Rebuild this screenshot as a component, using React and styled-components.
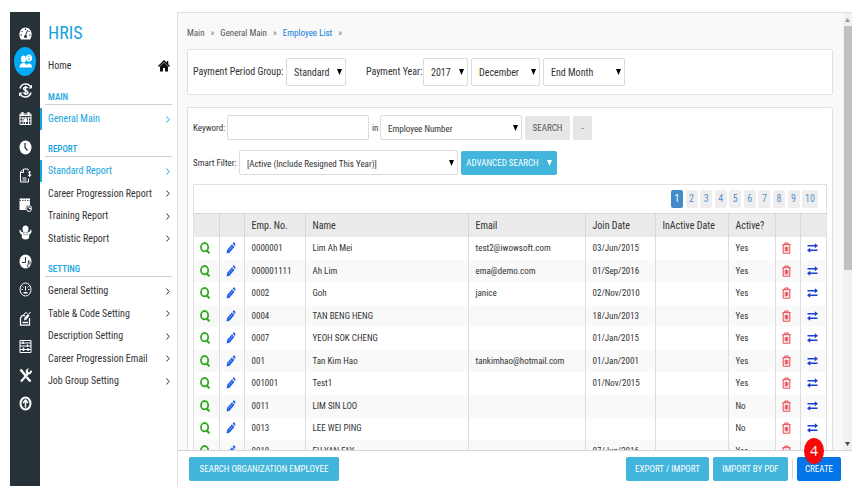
import styled, { createGlobalStyle } from "styled-components";

const GlobalStyle = createGlobalStyle`
  * {
    box-sizing: border-box;
  }

  body {
    margin: 0;
    background: #ffffff;
    color: #333333;
    font: 10px/14px "Roboto Condensed", Roboto, sans-serif;
  }

  button, input, select {
    font: inherit;
    color: inherit;
  }
`;

const Page = styled.div`
  display: flex;
  height: 100vh;
  padding: 12px 10px 10px;
`;

const Rail = styled.nav`
  display: flex;
  flex: none;
  flex-direction: column;
  width: 30px;
  padding-top: 7px;
  background: #263238;
`;

const RailLink = styled.a`
  display: flex;
  flex: none;
  align-items: center;
  justify-content: center;
  width: 22px;
  height: 28px;
  margin: 0 4px;
  border-radius: 50%;
  color: #ffffff;
  background: ${({ $active }) => ($active ? "#03a9f4" : "transparent")};

  &:nth-child(even) {
    height: 29px;
  }
`;

const Menu = styled.aside`
  flex: none;
  width: 138px;
  border-right: 1px solid #e0e0e0;
  background: #ffffff;
`;

const Brand = styled.h1`
  margin: 0;
  padding: 9px 8px 0;
  font-size: 18px;
  font-weight: 400;
  line-height: 24px;
  color: #14a5e0;
`;

const MenuLink = styled.a`
  display: flex;
  align-items: center;
  justify-content: space-between;
  height: 22px;
  padding: 0 7px 0 8px;
  text-decoration: none;
  color: ${({ $active }) => ($active ? "#14a5e0" : "#333333")};
  box-shadow: ${({ $active }) => ($active ? "inset 2px 0 #14a5e0" : "none")};

  &:nth-of-type(even) {
    height: 23px;
  }
`;

const HomeLink = styled(MenuLink)`
  margin: 10px 0;
`;

const Section = styled.section`
  margin-bottom: 9px;
`;

const SectionTitle = styled.h2`
  height: 18px;
  margin: 0 5px 3px;
  padding: 4px 3px 0;
  border-bottom: 1px solid #cfcfcf;
  font-size: 9px;
  font-weight: 500;
  line-height: 12px;
  color: #14a5e0;
`;

const Main = styled.main`
  display: flex;
  flex: 1;
  flex-direction: column;
  min-width: 0;
`;

const Viewport = styled.div`
  display: flex;
  flex: 1;
  min-height: 0;
  overflow: hidden;
  border-top: 1px solid #e0e0e0;
  background: #f9f9f9;
`;

const Content = styled.div`
  flex: 1;
  min-width: 0;
  padding: 13px 10px 0 9px;
`;

const ScrollTrack = styled.div`
  display: flex;
  flex: none;
  flex-direction: column;
  align-items: center;
  justify-content: space-between;
  width: 9px;
  padding: 5px 0 4px;
  background: #f1f1f1;
`;

const ScrollThumb = styled.div`
  width: 8px;
  height: 57%;
  margin: 4px 0 auto;
  background: #c1c1c1;
`;

const Crumbs = styled.nav`
  display: flex;
  gap: 6px;
  margin-bottom: 9px;
  font-size: 9px;
  color: #777777;
`;

const Crumb = styled.a`
  text-decoration: none;
  color: ${({ $current }) => ($current ? "#0d7bdc" : "#555555")};
`;

const Panel = styled.section`
  margin-bottom: 12px;
  padding: 8px 5px;
  border: 1px solid #e0e0e0;
  border-radius: 2px;
  background: #ffffff;
`;

const SearchPanel = styled(Panel)`
  padding-top: 7px;
  font-size: 9px;
`;

const FieldRow = styled.div`
  display: flex;
  align-items: center;
  gap: 3px;
  margin-bottom: ${({ $spaced }) => ($spaced ? "10px" : "0")};
`;

const FieldLabel = styled.label`
  flex: none;
  width: ${({ $width }) => $width};
  margin-left: ${({ $offset }) => $offset || "0"};
  white-space: nowrap;
`;

const TextInput = styled.input`
  width: 142px;
  height: 25px;
  padding: 0 7px;
  border: 1px solid #dcdcdc;
  border-radius: 2px;
`;

const SelectBox = styled.span`
  display: grid;
  flex: none;
  align-items: center;
  width: ${({ $width }) => $width};

  > * {
    grid-area: 1 / 1;
  }

  svg {
    justify-self: end;
    margin-right: 4px;
    color: #000000;
    pointer-events: none;
  }
`;

const Select = styled.select`
  width: 100%;
  height: ${({ $tall }) => ($tall ? "28px" : "25px")};
  padding: 2px 7px 0;
  border: 1px solid #dcdcdc;
  border-radius: 2px;
  background: #ffffff;
  appearance: none;
`;

const Button = styled.button`
  display: inline-flex;
  flex: none;
  align-items: center;
  justify-content: center;
  gap: 8px;
  width: ${({ $width }) => $width};
  height: 24px;
  padding: 0;
  border: 0;
  border-radius: 2px;
  font-size: 9px;
  white-space: nowrap;
  color: ${({ $tone }) => ($tone === "grey" ? "#555555" : "#ffffff")};
  background: ${({ $tone }) =>
    ({ grey: "#e6e6e6", primary: "#0275e8" })[$tone] || "#41b5dc"};
`;

const TableBox = styled.div`
  margin-top: 9px;
  border: 1px solid #e0e0e0;
`;

const Pagination = styled.nav`
  display: flex;
  align-items: center;
  justify-content: space-between;
  width: 147px;
  height: 28px;
  margin: 0 8px 0 auto;
  font-size: 10px;
`;

const PageButton = styled.button`
  min-width: 12px;
  height: 18px;
  padding: 0 3px;
  border: 0;
  border-radius: 2px;
  color: ${({ $current }) => ($current ? "#ffffff" : "#5b93c9")};
  background: ${({ $current }) => ($current ? "#428bca" : "#eeeeee")};
`;

const Table = styled.table`
  width: 100%;
  border-collapse: collapse;
  table-layout: fixed;
`;

const Col = styled.col`
  width: ${({ $width }) => $width};
`;

const HeadCell = styled.th`
  height: 23px;
  padding: 1px 7px 0;
  border-top: 1px solid #d8d8d8;
  border-right: 1px solid #d8d8d8;
  background: #ebebeb;
  font-size: 10px;
  font-weight: inherit;
  text-align: left;
  white-space: nowrap;

  &:last-child {
    border-right: 0;
  }
`;

const Row = styled.tr`
  height: 23px;

  &:nth-child(even) {
    height: 22px;
    background: #f9f9f9;
  }
`;

const Cell = styled.td`
  padding: 0 7px;
  border-right: 1px solid #dddddd;
  white-space: nowrap;

  &:last-child {
    border-right: 0;
  }
`;

const IconCell = styled(Cell)`
  padding: 0 6px;
`;

const IconButton = styled.button`
  display: block;
  padding: 0;
  border: 0;
  background: none;
  color: ${({ $color }) => $color};

  svg {
    display: block;
  }
`;

const ActionBar = styled.footer`
  display: flex;
  flex: none;
  align-items: center;
  gap: 4px;
  height: 36px;
  padding: 0 11px;
  border-top: 1px solid #d5d5d5;
  background: #ffffff;
`;

const Spacer = styled.span`
  flex: 1;
`;

const Divider = styled.span`
  width: 1px;
  height: 20px;
  background: #d5d5d5;
`;

const CreateWrap = styled.span`
  position: relative;
  display: flex;
`;

const StepBadge = styled.span`
  position: absolute;
  top: -19px;
  left: 7px;
  width: 20px;
  height: 26px;
  border-radius: 50%;
  background: #f80808;
  color: #ffffff;
  font: 14px/26px "Open Sans", sans-serif;
  text-align: center;
`;

const railIcons = [
  {
    label: "Dashboard",
    art: (
      <>
        <path d="M4 27C-3 17 2 3 13 3s16 14 9 24z" fill="currentColor" />
        <path d="M13 20l4-12M13 5v3M5 10l2 2M21 10l-2 2M3 18h3M20 18h3" stroke="#263238" strokeWidth="2" />
        <ellipse cx="13" cy="21" rx="3" ry="3" fill="#263238" />
      </>
    ),
  },
  {
    label: "Employees",
    art: (
      <>
        <ellipse cx="9" cy="10" rx="5" ry="7" fill="currentColor" />
        <path d="M1 27c0-6 3-9 8-9s7 3 7 9zM14 27c1-6 3-8 6-8s6 2 6 8z" fill="currentColor" />
        <ellipse cx="20" cy="8" rx="6" ry="7" fill="currentColor" />
        <path d="M20 4v2m0 2v4" stroke="#03a9f4" strokeWidth="2" />
      </>
    ),
  },
  {
    label: "Payroll",
    art: (
      <>
        <path d="M2 11C5 0 19-1 24 9M24 19C21 30 7 31 2 21" fill="none" stroke="currentColor" strokeWidth="3" />
        <path d="M25 4v6h-6M1 26v-6h6" fill="none" stroke="currentColor" strokeWidth="2" />
        <path d="M17 10c-2-3-8-2-8 1 0 5 9 3 9 8 0 4-7 4-9 0M13 6v18" fill="none" stroke="currentColor" strokeWidth="3" />
      </>
    ),
  },
  {
    label: "Calendar",
    art: (
      <>
        <path d="M2 6h22v21H2z" fill="none" stroke="currentColor" strokeWidth="2" />
        <path d="M2 9h22M2 14h22M2 20h22M8 12v15M13 12v15M19 12v15" stroke="currentColor" strokeWidth="2" />
        <path d="M7 2v7M19 2v7" stroke="currentColor" strokeWidth="4" />
        <path d="M10 16h6v6h-6z" fill="currentColor" />
      </>
    ),
  },
  {
    label: "Time",
    art: (
      <>
        <ellipse cx="13" cy="15" rx="12" ry="14" fill="currentColor" />
        <path d="M12 6v9l5 6" fill="none" stroke="#263238" strokeWidth="2.5" />
      </>
    ),
  },
  {
    label: "Claims",
    art: (
      <g fill="none" stroke="currentColor" strokeWidth="2">
        <path d="M18 5V2H9L3 8v20h16V21M9 2v7H3" />
        <path d="M7 20h8M7 24h8" />
        <path d="M24 9c-2-3-6-1-5 1s5 2 5 4-4 3-6 0M21 6v12" />
      </g>
    ),
  },
  {
    label: "Schedule",
    art: (
      <>
        <path d="M1 8h21v8c-7-1-10 5-8 10H1z" fill="currentColor" />
        <path d="M1 5h21" stroke="currentColor" strokeWidth="3" />
        <path d="M5 2v6M10 2v6M15 2v6M20 2v6" stroke="currentColor" strokeWidth="2" />
        <ellipse cx="20" cy="23" rx="5" ry="6" fill="none" stroke="currentColor" strokeWidth="2" />
        <path d="M20 19v4h4" fill="none" stroke="currentColor" strokeWidth="2" />
      </>
    ),
  },
  {
    label: "Benefits",
    art: (
      <>
        <ellipse cx="13" cy="8" rx="6" ry="7" fill="currentColor" />
        <path d="M2 8c2 7 6 7 11 7s9 0 11-7c3 7-1 10-4 12 2 5-1 9-7 9s-9-4-7-9C3 18-1 15 2 8z" fill="currentColor" />
        <path d="M7 17c3 3 9 3 12 0" fill="none" stroke="#263238" strokeWidth="1" />
      </>
    ),
  },
  {
    label: "Overtime",
    art: (
      <>
        <ellipse cx="13" cy="15" rx="12" ry="14" fill="currentColor" />
        <path d="M13 6v11H6M20 12l-3 14M22 15v6" fill="none" stroke="#263238" strokeWidth="2" />
      </>
    ),
  },
  {
    label: "Performance",
    art: (
      <>
        <ellipse cx="13" cy="15" rx="11" ry="13" fill="none" stroke="currentColor" strokeWidth="2" />
        <path d="M13 8v9M5 15h3M18 15h3M7 9l2 2M19 9l-2 2" stroke="currentColor" strokeWidth="2" />
        <path d="M9 20h8v3H9z" fill="currentColor" />
      </>
    ),
  },
  {
    label: "Appraisal",
    art: (
      <>
        <path d="M12 9H6l-3 5v14h18V14" fill="none" stroke="currentColor" strokeWidth="2.5" />
        <path d="M10 19l1-6 7-7 3 3-6 8z" fill="currentColor" />
        <path d="M7 23h11" stroke="currentColor" strokeWidth="3" />
        <path d="M9 8l4-5 4 2M20 6l3-4" fill="none" stroke="currentColor" strokeWidth="2" />
      </>
    ),
  },
  {
    label: "Reports",
    art: (
      <>
        <path d="M2 3h22v24H2z" fill="none" stroke="currentColor" strokeWidth="2" />
        <path d="M2 8h22M2 14h22M2 21h22" stroke="currentColor" strokeWidth="2" />
        <path d="M8 5v5M17 11v5M9 17v7M18 18v6" stroke="currentColor" strokeWidth="3" />
      </>
    ),
  },
  {
    label: "Tools",
    art: (
      <>
        <path d="M3 3l10 12M15 18l8 9" stroke="currentColor" strokeWidth="5" />
        <path d="M4 27L18 11" stroke="currentColor" strokeWidth="4" />
        <path d="M24 4l-4 5-3-3 3-5c-6 0-8 5-6 9 3 5 11 3 12-3z" fill="currentColor" />
      </>
    ),
  },
  {
    label: "Upgrade",
    art: (
      <>
        <ellipse cx="13" cy="15" rx="10" ry="12" fill="none" stroke="currentColor" strokeWidth="4" />
        <path d="M13 23V9M8 14l5-6 5 6" fill="none" stroke="currentColor" strokeWidth="3" />
      </>
    ),
  },
];

const sections = [
  { title: "MAIN", active: "General Main", items: ["General Main"] },
  {
    title: "REPORT",
    active: "Standard Report",
    items: ["Standard Report", "Career Progression Report", "Training Report", "Statistic Report"],
  },
  {
    title: "SETTING",
    items: [
      "General Setting",
      "Table & Code Setting",
      "Description Setting",
      "Career Progression Email",
      "Job Group Setting",
    ],
  },
];

const employees = [
  ["0000001", "Lim Ah Mei", "test2@iwowsoft.com", "03/Jun/2015", "", "Yes"],
  ["000001111", "Ah Lim", "ema@demo.com", "01/Sep/2016", "", "Yes"],
  ["0002", "Goh", "janice", "02/Nov/2010", "", "Yes"],
  ["0004", "TAN BENG HENG", "", "18/Jun/2013", "", "Yes"],
  ["0007", "YEOH SOK CHENG", "", "01/Jan/2015", "", "Yes"],
  ["001", "Tan Kim Hao", "tankimhao@hotmail.com", "01/Jan/2001", "", "Yes"],
  ["001001", "Test1", "", "01/Nov/2015", "", "Yes"],
  ["0011", "LIM SIN LOO", "", "", "", "No"],
  ["0013", "LEE WEI PING", "", "", "", "No"],
  ["0018", "EU YAN FAY", "", "07/Jun/2016", "", "Yes"],
];

const headings = ["", "", "Emp. No.", "Name", "Email", "Join Date", "InActive Date", "Active?", "", ""];
const columnWidths = ["25px", "25px", "61px", "auto", "117px", "70px", "73px", "47px", "25px", "26px"];

const Caret = () => (
  <svg width="5" height="6" viewBox="0 0 5 6">
    <path d="M0 0h5L2.5 6z" fill="currentColor" />
  </svg>
);

const Chevron = () => (
  <svg width="4" height="7" viewBox="0 0 4 7">
    <path d="M.5.5l2.7 3-2.7 3" fill="none" stroke="currentColor" strokeWidth="1" />
  </svg>
);

const HomeIcon = () => (
  <svg width="12" height="12" viewBox="0 0 24 24">
    <path d="M12 5l8 8v10h-6v-7h-4v7H4V13z" fill="#111111" />
    <path d="M1 13L12 2l11 11M19 2v7" fill="none" stroke="#111111" strokeWidth="3" />
  </svg>
);

const ViewIcon = () => (
  <svg width="10" height="12" viewBox="0 0 10 12">
    <ellipse cx="4.6" cy="5.2" rx="3.6" ry="4.2" fill="none" stroke="currentColor" strokeWidth="1.8" />
    <path d="M6.4 8l3 3.4" stroke="currentColor" strokeWidth="2" />
  </svg>
);

const EditIcon = () => (
  <svg width="10" height="12" viewBox="0 0 10 12">
    <path d="M.6 11.4l.6-3.6L6 2.2l2.4 2.8-4.9 5.7zM6.6 1.5L7.6.4c.5-.5 2.2 1.3 1.7 2.1L9 4.2z" fill="currentColor" />
    <path d="M2.6 8.6l4-4.6" stroke="#a9c2fa" strokeWidth=".6" />
  </svg>
);

const TrashIcon = () => (
  <svg width="9" height="12" viewBox="0 0 9 12">
    <path d="M.3 2.7h8.4M2.8 2.5V1h3.4v1.5M1.2 3v8.2h6.6V3M3.2 4.8v4.6M4.5 4.8v4.6M5.8 4.8v4.6" fill="none" stroke="currentColor" strokeWidth="1" />
  </svg>
);

const TransferIcon = () => (
  <svg width="11" height="10" viewBox="0 0 11 10">
    <path d="M.5 2.7h8M2.5 7.3h8" stroke="currentColor" strokeWidth="1.6" />
    <path d="M7.8.2v5L11 2.7zM3.2 4.8v5L0 7.3z" fill="currentColor" />
  </svg>
);

function SelectField({ id, label, value, width, tall }) {
  return (
    <SelectBox $width={width}>
      <Select id={id} aria-label={label} $tall={tall} defaultValue={value}>
        <option>{value}</option>
      </Select>
      <Caret />
    </SelectBox>
  );
}

function EmployeeTable() {
  return (
    <Table>
      <colgroup>
        {columnWidths.map((width, i) => (
          <Col key={i} $width={width} />
        ))}
      </colgroup>
      <thead>
        <tr>
          {headings.map((heading, i) => (
            <HeadCell key={i}>{heading}</HeadCell>
          ))}
        </tr>
      </thead>
      <tbody>
        {employees.map((employee) => (
          <Row key={employee[0]}>
            <IconCell>
              <IconButton $color="#2faa1e" aria-label="View"><ViewIcon /></IconButton>
            </IconCell>
            <IconCell>
              <IconButton $color="#1f5fe8" aria-label="Edit"><EditIcon /></IconButton>
            </IconCell>
            {employee.map((value, i) => (
              <Cell key={i}>{value}</Cell>
            ))}
            <IconCell>
              <IconButton $color="#e8454c" aria-label="Delete"><TrashIcon /></IconButton>
            </IconCell>
            <IconCell>
              <IconButton $color="#1a3fd0" aria-label="Transfer"><TransferIcon /></IconButton>
            </IconCell>
          </Row>
        ))}
      </tbody>
    </Table>
  );
}

export default function App() {
  return (
    <Page>
      <GlobalStyle />
      <Rail>
        {railIcons.map(({ label, art }) => (
          <RailLink key={label} href="#" aria-label={label} $active={label === "Employees"}>
            <svg width="13" height="15" viewBox="0 0 26 30">{art}</svg>
          </RailLink>
        ))}
      </Rail>

      <Menu>
        <Brand>HRIS</Brand>
        <HomeLink href="#">
          Home
          <HomeIcon />
        </HomeLink>
        {sections.map(({ title, active, items }) => (
          <Section key={title}>
            <SectionTitle>{title}</SectionTitle>
            {items.map((item) => (
              <MenuLink key={item} href="#" $active={item === active}>
                {item}
                <Chevron />
              </MenuLink>
            ))}
          </Section>
        ))}
      </Menu>

      <Main>
        <Viewport>
          <Content>
            <Crumbs>
              <Crumb href="#">Main</Crumb>»
              <Crumb href="#">General Main</Crumb>»
              <Crumb href="#" $current>Employee List</Crumb>»
            </Crumbs>

            <Panel>
              <FieldRow>
                <FieldLabel htmlFor="group" $width="90px">Payment Period Group:</FieldLabel>
                <SelectField id="group" value="Standard" width="60px" tall />
                <FieldLabel htmlFor="year" $width="54px" $offset="17px">Payment Year:</FieldLabel>
                <SelectField id="year" value="2017" width="45px" tall />
                <SelectField label="Month" value="December" width="69px" tall />
                <SelectField label="Period" value="End Month" width="82px" tall />
              </FieldRow>
            </Panel>

            <SearchPanel>
              <FieldRow $spaced>
                <FieldLabel htmlFor="keyword" $width="31px">Keyword:</FieldLabel>
                <TextInput id="keyword" />
                <FieldLabel htmlFor="field" $width="5px">in</FieldLabel>
                <SelectField id="field" value="Employee Number" width="142px" />
                <Button $tone="grey" $width="45px">SEARCH</Button>
                <Button $tone="grey" $width="19px">-</Button>
              </FieldRow>
              <FieldRow>
                <FieldLabel htmlFor="filter" $width="43px">Smart Filter:</FieldLabel>
                <SelectField id="filter" value="[Active (Include Resigned This Year)]" width="219px" />
                <Button $width="96px">
                  ADVANCED SEARCH
                  <Caret />
                </Button>
              </FieldRow>

              <TableBox>
                <Pagination aria-label="Pages">
                  {[1, 2, 3, 4, 5, 6, 7, 8, 9, 10].map((page) => (
                    <PageButton key={page} $current={page === 1}>{page}</PageButton>
                  ))}
                </Pagination>
                <EmployeeTable />
              </TableBox>
            </SearchPanel>
          </Content>

          <ScrollTrack>
            <svg width="5" height="4" viewBox="0 0 5 4">
              <path d="M0 4h5L2.5 0z" fill="#999999" />
            </svg>
            <ScrollThumb />
            <svg width="5" height="4" viewBox="0 0 5 4">
              <path d="M0 0h5L2.5 4z" fill="#444444" />
            </svg>
          </ScrollTrack>
        </Viewport>

        <ActionBar>
          <Button $width="150px">SEARCH ORGANIZATION EMPLOYEE</Button>
          <Spacer />
          <Button $width="83px">EXPORT / IMPORT</Button>
          <Button $width="75px">IMPORT BY PDF</Button>
          <Divider />
          <CreateWrap>
            <Button $tone="primary" $width="44px">CREATE</Button>
            <StepBadge>4</StepBadge>
          </CreateWrap>
        </ActionBar>
      </Main>
    </Page>
  );
}
